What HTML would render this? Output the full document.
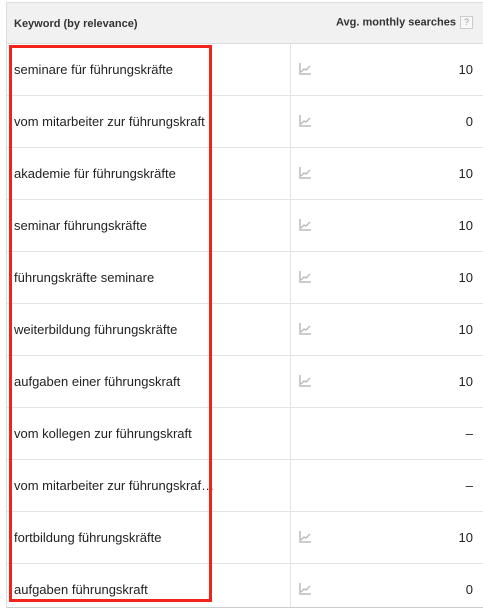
<!DOCTYPE html>
<html><head><meta charset="utf-8"><style>
body{margin:0;width:483px;height:612px;overflow:hidden;background:#fff;font-family:"Liberation Sans",Arial,sans-serif;position:relative}
.tbl{position:absolute;left:6px;top:2px;width:476px;border-left:1px solid #ddd;border-right:1px solid #ddd;border-top:1px solid #ddd}
.hdr{height:40px;background:#f1f1f1;border-bottom:1px solid #ddd;position:relative;font-weight:bold;font-size:11px;color:#333}
.hdr .a{position:absolute;left:7px;top:15px}
.hdr .b{position:absolute;right:10px;top:13px}
.q{display:inline-block;width:11px;height:11px;border:1px solid #ccc;background:#f8f8f8;color:#999;font-size:9px;font-weight:normal;text-align:center;line-height:11px;vertical-align:middle;margin-left:4px}
.row{height:51px;border-bottom:1px solid #e4e4e4;position:relative;font-size:13px;color:#222}
.row .k{position:absolute;left:7px;top:18px}
.row .d{position:absolute;left:283px;top:0;bottom:0;border-left:1px solid #e4e4e4}
.row .n{position:absolute;right:10px;top:18px}
.row svg{position:absolute;left:292px;top:19px}
.box{position:absolute;left:9px;top:45px;width:197px;height:551px;border:3px solid #f2231a}
</style></head><body>
<div class="tbl">
<div class="hdr"><span class="a">Keyword (by relevance)</span><span class="b">Avg. monthly searches<span class="q">?</span></span></div>
<div class="row"><span class="k">seminare für führungskräfte</span><span class="d"></span><svg width="13" height="12"><path d="M1 0V11H12M2 9L5 6L7 7L11 3" stroke="#bbb" stroke-width="1.5" fill="none"/></svg><span class="n">10</span></div>
<div class="row"><span class="k">vom mitarbeiter zur führungskraft</span><span class="d"></span><svg width="13" height="12"><path d="M1 0V11H12M2 9L5 6L7 7L11 3" stroke="#bbb" stroke-width="1.5" fill="none"/></svg><span class="n">0</span></div>
<div class="row"><span class="k">akademie für führungskräfte</span><span class="d"></span><svg width="13" height="12"><path d="M1 0V11H12M2 9L5 6L7 7L11 3" stroke="#bbb" stroke-width="1.5" fill="none"/></svg><span class="n">10</span></div>
<div class="row"><span class="k">seminar führungskräfte</span><span class="d"></span><svg width="13" height="12"><path d="M1 0V11H12M2 9L5 6L7 7L11 3" stroke="#bbb" stroke-width="1.5" fill="none"/></svg><span class="n">10</span></div>
<div class="row"><span class="k">führungskräfte seminare</span><span class="d"></span><svg width="13" height="12"><path d="M1 0V11H12M2 9L5 6L7 7L11 3" stroke="#bbb" stroke-width="1.5" fill="none"/></svg><span class="n">10</span></div>
<div class="row"><span class="k">weiterbildung führungskräfte</span><span class="d"></span><svg width="13" height="12"><path d="M1 0V11H12M2 9L5 6L7 7L11 3" stroke="#bbb" stroke-width="1.5" fill="none"/></svg><span class="n">10</span></div>
<div class="row"><span class="k">aufgaben einer führungskraft</span><span class="d"></span><svg width="13" height="12"><path d="M1 0V11H12M2 9L5 6L7 7L11 3" stroke="#bbb" stroke-width="1.5" fill="none"/></svg><span class="n">10</span></div>
<div class="row"><span class="k">vom kollegen zur führungskraft</span><span class="d"></span><span class="n">–</span></div>
<div class="row"><span class="k">vom mitarbeiter zur führungskraf…</span><span class="d"></span><span class="n">–</span></div>
<div class="row"><span class="k">fortbildung führungskräfte</span><span class="d"></span><svg width="13" height="12"><path d="M1 0V11H12M2 9L5 6L7 7L11 3" stroke="#bbb" stroke-width="1.5" fill="none"/></svg><span class="n">10</span></div>
<div class="row" style="height:43px;border-bottom:1px solid #ccc"><span class="k">aufgaben führungskraft</span><span class="d"></span><svg width="13" height="12"><path d="M1 0V11H12M2 9L5 6L7 7L11 3" stroke="#bbb" stroke-width="1.5" fill="none"/></svg><span class="n">0</span></div>
</div>
<div class="box"></div>
</body></html>
